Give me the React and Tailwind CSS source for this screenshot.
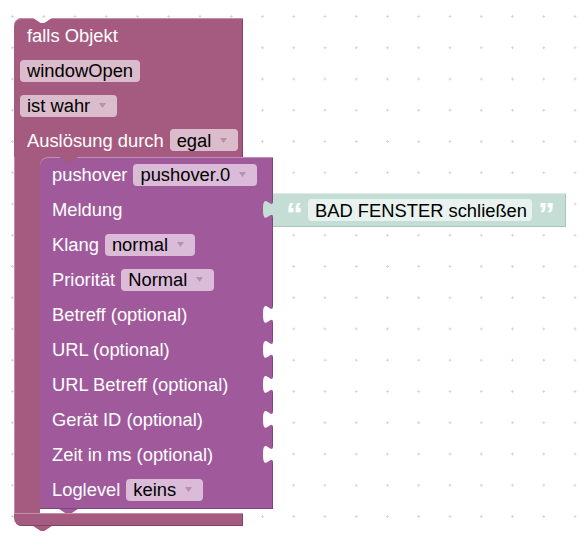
import React from "react";

const NOTCH = "M10 0 C10 12.5 0 -10 0 9.375 S10 6.25 10 18.75 Z";

function Arrow({ color }) {
  return (
    <svg width="7" height="5" viewBox="0 0 7 5" className="ml-[9px] mr-[11px] shrink-0">
      <path d="M0 0H7L3.5 5Z" fill={color} />
    </svg>
  );
}

function T({ children, className }) {
  return <span className={"relative top-[1px] " + (className || "")}>{children}</span>;
}

function OuterPill({ children, arrow }) {
  return (
    <span className={"h-[22px] rounded-[4px] flex items-center pl-[7px] text-black bg-[#dbbccc] " + (arrow ? "" : "pr-[7px]")}>
      <T>{children}</T>
      {arrow && <Arrow color="#b8909f" />}
    </span>
  );
}

function InnerPill({ children }) {
  return (
    <span className="h-[22px] rounded-[4px] flex items-center pl-[7px] ml-[6px] text-black bg-[#dbbcd8]">
      <T>{children}</T>
      <Arrow color="#b690b3" />
    </span>
  );
}

function Notch() {
  return (
    <svg width="10" height="19" viewBox="0 0 10 19" className="absolute right-0 top-[8px] overflow-visible">
      <path d={NOTCH} fill="#ffffff" />
    </svg>
  );
}

function Row({ label, children, notch, extra }) {
  return (
    <div className="relative h-[35px] flex items-center pl-[12px] text-white">
      <T>{label}</T>
      {children}
      {notch && <Notch />}
      {extra}
    </div>
  );
}

function TextBlock() {
  return (
    <div className="absolute left-full top-[1px] h-[34px] w-[293px] bg-[#c5ded5] flex items-center shadow-[inset_0_1px_0_#dcebe5,inset_-1px_-1px_0_#a9c4ba]">
      <svg width="10" height="19" viewBox="0 0 10 19" className="absolute -left-[10px] top-[7px] overflow-visible">
        <path d={NOTCH} fill="#c5ded5" />
      </svg>
      <span className="self-start mt-[4px] ml-[13px] w-[22px] text-[34px] leading-none font-bold text-white">“</span>
      <span className="h-[22px] w-[224px] rounded-[4px] bg-[#e8f2ee] flex items-center pl-[7px] text-black">
        <T>BAD FENSTER schließen</T>
      </span>
      <span className="self-start mt-[4px] ml-[6px] text-[34px] leading-none font-bold text-white">”</span>
    </div>
  );
}

function Tab({ color, className }) {
  return (
    <svg width="19" height="5" viewBox="0 0 18.75 5" className={className}>
      <path d="M0 0L7.5 5H11.25L18.75 0Z" fill={color} />
    </svg>
  );
}

function Grid() {
  return (
    <svg className="absolute inset-0" width="579" height="538">
      <defs>
        <pattern id="g" x="11" y="15" width="31.25" height="31.25" patternUnits="userSpaceOnUse">
          <path d="M0 1.5H3M1.5 0V3" stroke="#d6d6d6" strokeWidth="1" />
        </pattern>
      </defs>
      <rect width="579" height="538" fill="url(#g)" />
    </svg>
  );
}

export default function App() {
  return (
    <div className="relative w-[579px] h-[538px] overflow-hidden bg-white font-['Liberation_Sans',Arial,sans-serif] text-[18.35px] leading-none">
      <Grid />
      <div className="absolute left-[14px] top-[18px] flex flex-col">
        {/* top part */}
        <div className="relative w-[229px] h-[139px] bg-[#a55b80] rounded-tl-[8px] flex flex-col shadow-[inset_0_1px_0_#c490a9,inset_-1px_0_0_#7f4563]">
          <Tab color="#ffffff" className="absolute left-[18.75px] top-0" />
          <div className="h-[35px] flex items-center pl-[13px] text-white">
            <T>falls Objekt</T>
          </div>
          <div className="h-[35px] flex items-center pl-[6px]">
            <OuterPill>windowOpen</OuterPill>
          </div>
          <div className="h-[35px] flex items-center pl-[6px]">
            <OuterPill arrow>ist wahr</OuterPill>
          </div>
          <div className="h-[34px] flex items-center pl-[13px] text-white">
            <T className="mr-[6px]">Auslösung durch</T>
            <OuterPill arrow>egal</OuterPill>
          </div>
        </div>
        {/* middle */}
        <div className="flex">
          <div className="w-[26px] bg-[#a55b80] shadow-[inset_1px_0_0_#c490a9]" />
          <div className="flex flex-col">
            <div className="bg-[#a55b80]">
              <div className="relative w-[233px] h-[352px] bg-[#a05a9c] rounded-tl-[8px] flex flex-col shadow-[inset_0_1px_0_#bf8fbb,inset_-1px_-1px_0_#7c4479]">
                <Tab color="#a55b80" className="absolute left-[18.75px] top-0" />
                <Row label="pushover">
                  <InnerPill>pushover.0</InnerPill>
                </Row>
                <Row label="Meldung" extra={<TextBlock />} />
                <Row label="Klang">
                  <InnerPill>normal</InnerPill>
                </Row>
                <Row label="Priorität">
                  <InnerPill>Normal</InnerPill>
                </Row>
                <Row label="Betreff (optional)" notch />
                <Row label="URL (optional)" notch />
                <Row label="URL Betreff (optional)" notch />
                <Row label="Gerät ID (optional)" notch />
                <Row label="Zeit in ms (optional)" notch />
                <Row label="Loglevel">
                  <InnerPill>keins</InnerPill>
                </Row>
                <Tab color="#a05a9c" className="absolute left-[18.75px] top-full" />
              </div>
            </div>
            <div className="h-[4px]" />
          </div>
        </div>
        {/* bottom arm */}
        <div className="relative w-[229px] h-[13px] bg-[#a55b80] rounded-bl-[8px] shadow-[inset_0_1px_0_#c490a9,inset_-1px_-1px_0_#7f4563]">
          <Tab color="#a55b80" className="absolute left-[18.75px] top-full" />
        </div>
      </div>
    </div>
  );
}
